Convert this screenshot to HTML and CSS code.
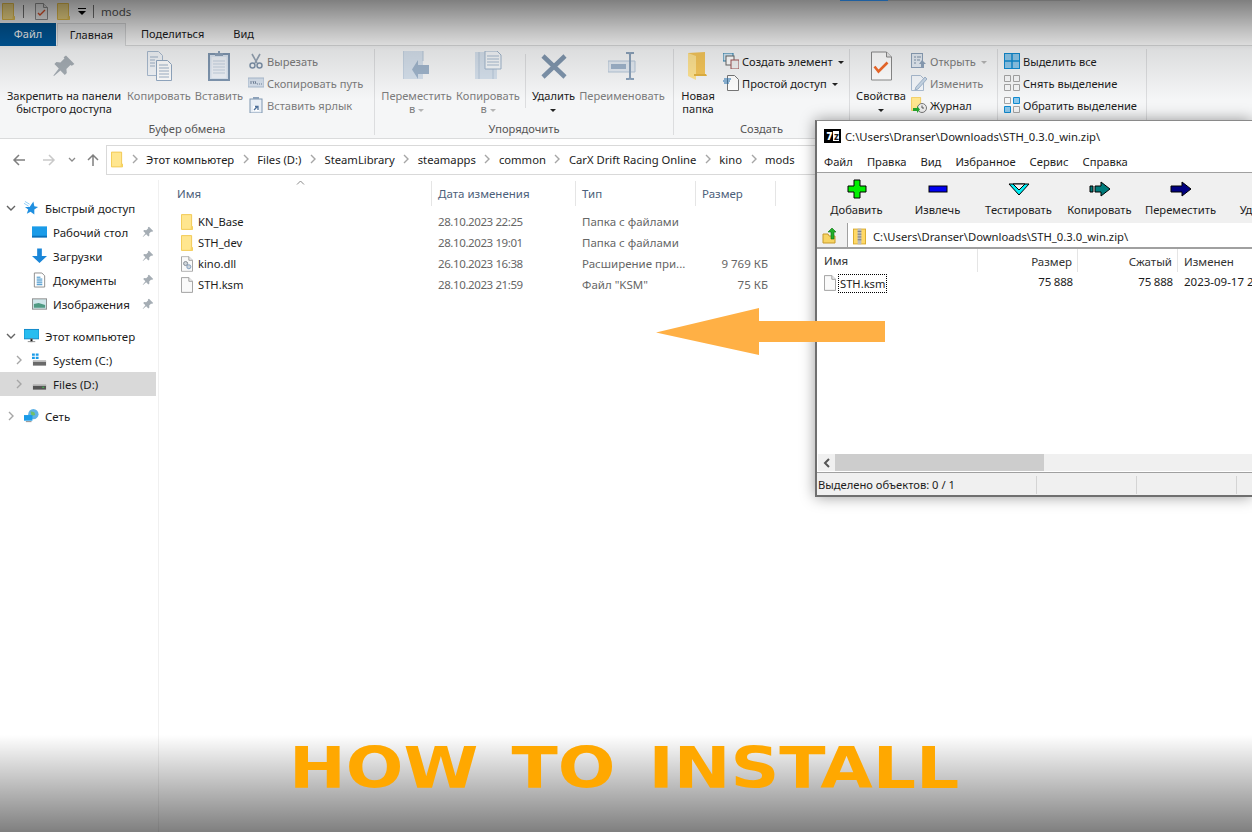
FILE: index.html
```html
<!DOCTYPE html>
<html>
<head lang="ru">
    <meta charset="UTF-8">
    <title>mods</title>
    <link rel="stylesheet" href="styles.css">
</head>
<body>
<svg class="defs" width="0" height="0">
    <symbol id="folder" viewBox="0 0 13 17">
        <path d="M.5.5h11v13h1v3H.5z" fill="#ffe68f" stroke="#f1c84e"/>
        <path d="M10.500 13.500h2v3h-2z" fill="#f7d463"/>
    </symbol>
    <symbol id="doc" viewBox="0 0 13 17">
        <path d="M.5.5h8l4 4v12H.5z" fill="#fafafa" stroke="#9b9b9b"/>
        <path d="M8.500.5v4h4" fill="#eee" stroke="#9b9b9b"/>
    </symbol>
    <symbol id="dll" viewBox="0 0 13 17">
        <use href="#doc"/>
        <circle cx="5" cy="8" r="2.200" fill="#cfd5da" stroke="#808890"/>
        <circle cx="8.500" cy="11.500" r="2.200" fill="#cfd5da" stroke="#7e9cc0"/>
    </symbol>
    <symbol id="chev-r" viewBox="0 0 8 10">
        <path d="M2 1l4 4-4 4" fill="none" stroke="#a6a6a6" stroke-width="1.400"/>
    </symbol>
    <symbol id="chev-d" viewBox="0 0 10 8">
        <path d="M1 2l4 4 4-4" fill="none" stroke="#636363" stroke-width="1.400"/>
    </symbol>
    <symbol id="pin" viewBox="0 0 12 12">
        <path d="M7 .8l4.200 4.200-1.300.9-.7-.4-2 2 .2 2-1 1-2.200-2.300L1 11l-.3-.3 2.700-3.400L1.200 5l1-1 2 .2 2-2-.4-.6z" fill="#a5adb4"/>
    </symbol>
</svg>

<div class="explorer">
    <div class="titlebar">
        <svg class="qa-folder"><use href="#folder"/></svg>
        <i class="qa-sep sep-one"></i>
        <svg class="qa-check" viewBox="0 0 13 17">
            <use href="#doc"/>
            <path d="M3 10l2 2 5-5" fill="none" stroke="#e8542a" stroke-width="1.400"/>
        </svg>
        <svg class="qa-folder"><use href="#folder"/></svg>
        <svg class="qa-more" viewBox="0 0 8 7"><path d="M0 .5h8" stroke="#000"/><path d="M0 3h8L4 7z" fill="#000"/></svg>
        <i class="qa-sep sep-two"></i>
        <span class="window-name">mods</span>
    </div>

    <div class="tabs">
        <span class="tab tab-file">Файл</span>
        <span class="tab tab-active">Главная</span>
        <span class="tab">Поделиться</span>
        <span class="tab">Вид</span>
    </div>

    <div class="ribbon">
        <div class="group group-clip">
            <div class="group-body">
                <div class="big pin-btn">
                    <svg width="24" height="24" viewBox="0 0 12 12"><use href="#pin"/></svg>
                    <span>Закрепить на панели<br>быстрого доступа</span>
                </div>
                <div class="big off copy-btn">
                    <svg width="25" height="30" viewBox="0 0 25 30">
                        <path d="M.5.5h11l4 4v20H.5z" fill="#f3f6fa" stroke="#a9bbd0"/>
                        <path d="M9.500 9.500h11l4 4v16h-15z" fill="#fff" stroke="#93a9c2"/>
                        <path d="M3 6h8M3 9h5M3 12h5M3 15h5M12 14h9M12 17h10M12 20h10M12 23h10M12 26h10" stroke="#9fb2c8"/>
                    </svg>
                    <span>Копировать</span>
                </div>
                <div class="big off paste-btn">
                    <svg width="22" height="30" viewBox="0 0 22 30">
                        <rect x="1" y="3" width="20" height="26" fill="#dbe5f1" stroke="#7f96b0" stroke-width="2"/>
                        <rect x="3.500" y="6" width="15" height="21" fill="#eef2f8"/>
                        <path d="M5 10h12M5 13h12M5 16h12M5 19h12M5 22h12" stroke="#c3d0df"/>
                        <path d="M7 5V2h3V0h2v2h3v3z" fill="#8da2ba"/>
                    </svg>
                    <span>Вставить</span>
                </div>
                <div class="smalls">
                    <div class="small off">
                        <svg viewBox="0 0 16 16"><path d="M4 1l5 9M12 1L7 10" stroke="#95a3b3" stroke-width="1.600" fill="none"/><circle cx="4.500" cy="12.500" r="2.500" fill="none" stroke="#7f93aa" stroke-width="1.500"/><circle cx="11.500" cy="12.500" r="2.500" fill="none" stroke="#7f93aa" stroke-width="1.500"/></svg>
                        <span>Вырезать</span>
                    </div>
                    <div class="small off">
                        <svg viewBox="0 0 16 16"><rect y="3" width="16" height="9" fill="#d4deea" stroke="#a9bbd0"/><path d="M3 6v3M5 6l1 3M7 6l1 3" stroke="#6f8098"/><path d="M9 9h1M11 9h1M13 9h1" stroke="#6f8098"/></svg>
                        <span>Скопировать путь</span>
                    </div>
                    <div class="small off">
                        <svg viewBox="0 0 16 16"><rect x="2" y="2" width="12" height="14" fill="#e8eef5" stroke="#7f96b0"/><path d="M5 2V0h6v2z" fill="#8da2ba"/><path d="M5 9h6v5H5z" fill="#fff"/><path d="M6 13l3-3M7 9.500h3V13" stroke="#4d6f99" fill="none" stroke-width="1.300"/></svg>
                        <span>Вставить ярлык</span>
                    </div>
                </div>
            </div>
            <div class="group-name">Буфер обмена</div>
        </div>

        <div class="group group-org">
            <div class="group-body">
                <div class="big off move-btn">
                    <svg width="27" height="30" viewBox="0 0 27 30">
                        <path d="M0 0h20v28H0z" fill="#d5e0ec"/><path d="M0 0v28M20 0v10" stroke="#b5c6d8"/>
                        <path d="M26 14v9H15v5L9 18.500l6-9.500v5z" fill="#9fb4cb"/>
                    </svg>
                    <span>Переместить<br>в <b class="caret-off"></b></span>
                </div>
                <div class="big off copyto-btn">
                    <svg width="27" height="30" viewBox="0 0 27 30">
                        <path d="M0 1h22v27H0z" fill="#d5e0ec"/><path d="M4 1v27M18 1v27" stroke="#b5c6d8"/>
                        <path d="M10 0h12l4 4v14H10z" fill="#f5f8fb" stroke="#9fb4cb"/>
                        <path d="M12 5h12M12 8h12M12 11h12M12 14h12" stroke="#a8bbd0"/>
                    </svg>
                    <span>Копировать<br>в <b class="caret-off"></b></span>
                </div>
                <i class="inner-sep"></i>
                <div class="big del-btn">
                    <svg width="26" height="26" viewBox="0 0 26 26"><path d="M2 3l22 21M24 3L2 24" fill="none" stroke="#7f95ad" stroke-width="4.500"/></svg>
                    <span>Удалить<br><b class="caret"></b></span>
                </div>
                <div class="big off ren-btn">
                    <svg width="28" height="28" viewBox="0 0 28 28">
                        <path d="M0 9h27v11H0z" fill="#e3eaf2" stroke="#b5c6d8"/>
                        <path d="M3 12h15v5H3z" fill="#9fb4cb"/>
                        <path d="M18 1h3l1 1 1-1h3M22 2v24M18 27h3l1-1 1 1h3" fill="none" stroke="#8ba2bb" stroke-width="2"/>
                    </svg>
                    <span>Переименовать</span>
                </div>
            </div>
            <div class="group-name">Упорядочить</div>
        </div>

        <div class="group group-new">
            <div class="group-body">
                <div class="big new-btn">
                    <svg width="20" height="28" viewBox="0 0 20 28">
                        <path d="M0 1l17-1v24H6z" fill="#f5c65a"/>
                        <path d="M0 1l8 3v24l-8-4z" fill="#ffe391"/>
                        <path d="M6 24h13l-1-2H6z" fill="#e3b341"/>
                    </svg>
                    <span>Новая<br>папка</span>
                </div>
                <div class="smalls">
                    <div class="small">
                        <svg viewBox="0 0 16 16"><rect x="0" y="0" width="10" height="8" fill="#cfe6f5" stroke="#2b7da8"/><rect x="3" y="3" width="8" height="9" fill="#fff" stroke="#666"/><rect x="8" y="7" width="8" height="9" fill="#f1f1f1" stroke="#a05050"/></svg>
                        <span>Создать элемент <b class="caret"></b></span>
                    </div>
                    <div class="small">
                        <svg viewBox="0 0 16 16"><path d="M4.500.5h7l4 4v11h-11z" fill="#fff" stroke="#777"/><path d="M1 4h7M0 6h7M1 8h5" stroke="#1f6fb0"/></svg>
                        <span>Простой доступ <b class="caret"></b></span>
                    </div>
                </div>
            </div>
            <div class="group-name">Создать</div>
        </div>

        <div class="group group-open">
            <div class="group-body">
                <div class="big props-btn">
                    <svg width="21" height="29" viewBox="0 0 21 29">
                        <path d="M.5.5h15l5 5v23H.5z" fill="#fff" stroke="#8a8a8a"/>
                        <path d="M15.500.5v5h5" fill="#e9e9e9" stroke="#8a8a8a"/>
                        <path d="M3.500 15l4 5 9-9" fill="none" stroke="#f26a2a" stroke-width="2.600"/>
                    </svg>
                    <span>Свойства<br><b class="caret"></b></span>
                </div>
                <div class="smalls">
                    <div class="small off">
                        <svg viewBox="0 0 16 16"><rect x=".5" y=".5" width="11" height="14" fill="#e4ebf3" stroke="#8da2ba"/><path d="M3 4h2M3 7h2M3 10h2M6 4h4M6 7h3" stroke="#7f93aa"/><path d="M11 7l4 4h-2v4h-3v-4H8z" fill="#8da2ba"/></svg>
                        <span>Открыть <b class="caret-off"></b></span>
                    </div>
                    <div class="small off">
                        <svg viewBox="0 0 16 16"><path d="M.5.500h9l3 3v12H.500z" fill="#f3f6fa" stroke="#a9bbd0"/><path d="M5 12l9-10 2 2-9 10-3 1z" fill="#c7d6e6" stroke="#9fb4cb"/></svg>
                        <span>Изменить</span>
                    </div>
                    <div class="small">
                        <svg viewBox="0 0 16 16"><use href="#folder" width="11" height="14"/><circle cx="11" cy="11" r="4.500" fill="#eee" stroke="#777"/><path d="M11 8.500V11h2" fill="none" stroke="#555"/><path d="M2 11h4v-2l3 3.500-3 3.500v-2H2z" fill="#27a72f"/></svg>
                        <span>Журнал</span>
                    </div>
                </div>
            </div>
        </div>

        <div class="group group-sel">
            <div class="group-body">
                <div class="smalls">
                    <div class="small">
                        <svg viewBox="0 0 16 16"><rect x=".5" y=".5" width="15" height="15" fill="#8cc7ea" stroke="#0f8ad0"/><path d="M8 0v16M0 8h16" stroke="#0f8ad0" stroke-width="1.500"/></svg>
                        <span>Выделить все</span>
                    </div>
                    <div class="small">
                        <svg viewBox="0 0 16 16"><path d="M.5.500h6v6h-6zM9.500.500h6v6h-6zM.5 9.500h6v6h-6zM9.500 9.500h6v6h-6z" fill="none" stroke="#a4a4a4"/></svg>
                        <span>Снять выделение</span>
                    </div>
                    <div class="small">
                        <svg viewBox="0 0 16 16"><path d="M.5.500h6v6h-6zM9.500 9.500h6v6h-6z" fill="none" stroke="#a4a4a4"/><path d="M9.500.500h6v6h-6zM.5 9.500h6v6h-6z" fill="#8cc7ea" stroke="#0f8ad0"/></svg>
                        <span>Обратить выделение</span>
                    </div>
                </div>
            </div>
        </div>
    </div>

    <div class="navbar">
        <svg class="nav-btn" viewBox="0 0 14 14"><path d="M13 7H2M7 2L2 7l5 5" fill="none" stroke="#7f7f7f" stroke-width="1.500"/></svg>
        <svg class="nav-btn off" viewBox="0 0 14 14"><path d="M1 7h11M7 2l5 5-5 5" fill="none" stroke="#c9c9c9" stroke-width="1.500"/></svg>
        <svg class="nav-drop" viewBox="0 0 10 8"><path d="M2 2l3 3 3-3" fill="none" stroke="#8a8a8a" stroke-width="1.300"/></svg>
        <svg class="nav-btn" viewBox="0 0 14 14"><path d="M7 13V2M2 7l5-5 5 5" fill="none" stroke="#7f7f7f" stroke-width="1.500"/></svg>
        <div class="crumbs">
            <svg class="crumb-folder"><use href="#folder"/></svg>
            <svg class="chev"><use href="#chev-r"/></svg>
            <span>Этот компьютер</span>
            <svg class="chev"><use href="#chev-r"/></svg>
            <span>Files (D:)</span>
            <svg class="chev"><use href="#chev-r"/></svg>
            <span>SteamLibrary</span>
            <svg class="chev"><use href="#chev-r"/></svg>
            <span>steamapps</span>
            <svg class="chev"><use href="#chev-r"/></svg>
            <span>common</span>
            <svg class="chev"><use href="#chev-r"/></svg>
            <span>CarX Drift Racing Online</span>
            <svg class="chev"><use href="#chev-r"/></svg>
            <span>kino</span>
            <svg class="chev"><use href="#chev-r"/></svg>
            <span>mods</span>
        </div>
    </div>

    <div class="main">
        <div class="side">
            <div class="tree-row top">
                <svg class="tree-chev"><use href="#chev-d"/></svg>
                <svg class="tree-icon" viewBox="0 0 16 16"><path d="M10 1l1 5 4 1-4 2.500L11 15l-4-3-4 2 1.500-4.500L1 7h5z" fill="#1f8fe0"/><path d="M0 3l5 3M1 1l5 3" stroke="#8ccbf5"/></svg>
                <span>Быстрый доступ</span>
            </div>
            <div class="tree-row">
                <svg class="tree-icon" viewBox="0 0 16 16"><rect y="2" width="16" height="11" fill="#1a9be8"/><rect y="12" width="16" height="2" fill="#0a6fb8"/></svg>
                <span>Рабочий стол</span>
                <svg class="pin-mark"><use href="#pin"/></svg>
            </div>
            <div class="tree-row">
                <svg class="tree-icon" viewBox="0 0 16 16"><path d="M5.500 0h5v8H16l-8 7.500L0 8h5.500z" fill="#1a86d8"/></svg>
                <span>Загрузки</span>
                <svg class="pin-mark"><use href="#pin"/></svg>
            </div>
            <div class="tree-row">
                <svg class="tree-icon" viewBox="0 0 16 16"><path d="M2.500.5h8l3 3v12h-11z" fill="#fff" stroke="#8a8a8a"/><path d="M5 5h4M5 7h6M5 9h6M5 11h6M5 13h6" stroke="#2b86c5"/></svg>
                <span>Документы</span>
                <svg class="pin-mark"><use href="#pin"/></svg>
            </div>
            <div class="tree-row">
                <svg class="tree-icon" viewBox="0 0 16 16"><rect x=".5" y="2.500" width="15" height="11" fill="#cfe6ea" stroke="#8a8a8a"/><path d="M2 8l5-1 7 2v3H2z" fill="#4f9a83"/></svg>
                <span>Изображения</span>
                <svg class="pin-mark"><use href="#pin"/></svg>
            </div>
            <div class="tree-row top gap">
                <svg class="tree-chev"><use href="#chev-d"/></svg>
                <svg class="tree-icon" viewBox="0 0 16 16"><rect y="1" width="16" height="10" fill="#27bdf0" stroke="#0b86c7"/><path d="M4 14h8M7 11h2v3H7z" stroke="#8a8a8a"/></svg>
                <span>Этот компьютер</span>
            </div>
            <div class="tree-row">
                <svg class="tree-chev right"><use href="#chev-r"/></svg>
                <svg class="tree-icon" viewBox="0 0 16 16"><rect x="1" y="9" width="14" height="5" fill="#6a6a6a"/><rect x="1" y="8" width="14" height="2" fill="#c7c7c7"/><path d="M0 1h3v2.500H0zM4 1h3v2.500H4zM0 4.500h3V7H0zM4 4.500h3V7H4z" fill="#1a9be8"/></svg>
                <span>System (C:)</span>
            </div>
            <div class="tree-row selected">
                <svg class="tree-chev right"><use href="#chev-r"/></svg>
                <svg class="tree-icon" viewBox="0 0 16 16"><rect x="1" y="9" width="14" height="5" fill="#555"/><rect x="1" y="8" width="14" height="2" fill="#bcbcbc"/><rect x="11" y="11" width="2" height="1" fill="#3fd04f"/></svg>
                <span>Files (D:)</span>
            </div>
            <div class="tree-row top gap">
                <svg class="tree-chev net"><use href="#chev-r"/></svg>
                <svg class="tree-icon" viewBox="0 0 16 16"><circle cx="10" cy="6" r="5.500" fill="#5fb2e6"/><path d="M7 3l4 1 1 3-4 1z" fill="#6fbf6a"/><rect y="7" width="9" height="6" fill="#1a9be8"/><path d="M2 14h6" stroke="#888"/></svg>
                <span>Сеть</span>
            </div>
        </div>

        <div class="files">
            <div class="list-head">
                <span class="col-name">Имя</span>
                <span>Дата изменения</span>
                <span>Тип</span>
                <span>Размер</span>
                <svg class="sort-caret" viewBox="0 0 9 5"><path d="M1 4.500l3.500-3.500L8 4.500" fill="none" stroke="#8a8a8a"/></svg>
            </div>
            <div class="file-row">
                <span class="file-name"><svg><use href="#folder"/></svg>KN_Base</span>
                <span class="date">28.10.2023 22:25</span>
                <span>Папка с файлами</span>
                <span></span>
            </div>
            <div class="file-row">
                <span class="file-name"><svg><use href="#folder"/></svg>STH_dev</span>
                <span class="date">28.10.2023 19:01</span>
                <span>Папка с файлами</span>
                <span></span>
            </div>
            <div class="file-row">
                <span class="file-name"><svg><use href="#dll"/></svg>kino.dll</span>
                <span class="date">26.10.2023 16:38</span>
                <span>Расширение при...</span>
                <span class="size">9 769 КБ</span>
            </div>
            <div class="file-row">
                <span class="file-name"><svg><use href="#doc"/></svg>STH.ksm</span>
                <span class="date">28.10.2023 21:59</span>
                <span>Файл "KSM"</span>
                <span class="size">75 КБ</span>
            </div>
        </div>
    </div>
</div>

<div class="zip">
    <div class="zip-title">
        <span class="zip-logo"><b>7</b>z</span>
        <span>C:\Users\Dranser\Downloads\STH_0.3.0_win.zip\</span>
    </div>
    <div class="zip-menu">
        <span>Файл</span><span>Правка</span><span>Вид</span><span>Избранное</span><span>Сервис</span><span>Справка</span>
    </div>
    <div class="zip-tools">
        <div class="tool">
            <svg viewBox="0 0 20 20"><path d="M7 1h6v6h6v6h-6v6H7v-6H1V7h6z" fill="#00f000" stroke="#000"/></svg>
            <span>Добавить</span>
        </div>
        <div class="tool">
            <svg viewBox="0 0 20 20"><rect x="1" y="7" width="18" height="6" fill="#0000f0" stroke="#000"/></svg>
            <span>Извлечь</span>
        </div>
        <div class="tool">
            <svg viewBox="0 0 22 20"><path d="M1 5h20l-10 11z" fill="#00eef5" stroke="#000"/><path d="M5 5l6 6 6-6z" fill="#f0f0f0" stroke="#000"/></svg>
            <span>Тестировать</span>
        </div>
        <div class="tool">
            <svg viewBox="0 0 22 20"><path d="M1 7h3v6H1zM6 7h6V3l9 7-9 7v-4H6z" fill="#007b7b" stroke="#000"/></svg>
            <span>Копировать</span>
        </div>
        <div class="tool">
            <svg viewBox="0 0 22 20"><path d="M1 7h11V3l9 7-9 7v-4H1z" fill="#000080" stroke="#000"/></svg>
            <span>Переместить</span>
        </div>
        <div class="tool"><span class="tool-blank"></span><span>Удалить</span></div>
    </div>
    <div class="zip-path">
        <svg class="zip-up" viewBox="0 0 16 16"><path d="M1 6h5l1 2h6v7H1z" fill="#f7d463" stroke="#c79a2a"/><path d="M9 11V4H6l4-4 4 4h-2v7z" fill="#22b02a" stroke="#0d6b12" stroke-width=".6"/></svg>
        <div class="zip-box">
            <svg viewBox="0 0 14 17"><rect x=".5" y=".5" width="13" height="16" fill="#ffd966" stroke="#d9a92a"/><rect x="5" y="0" width="4" height="17" fill="#bdbdbd"/><path d="M5 3h4M5 6h4M5 9h4M5 12h4" stroke="#777"/></svg>
            <span>C:\Users\Dranser\Downloads\STH_0.3.0_win.zip\</span>
        </div>
    </div>
    <div class="zip-list">
        <div class="zip-head">
            <span class="z-name">Имя</span>
            <span class="z-num">Размер</span>
            <span class="z-num">Сжатый</span>
            <span class="z-date">Изменен</span>
        </div>
        <div class="zip-row">
            <span class="z-name">
                <svg><use href="#doc"/></svg>
                <span class="focus">STH.ksm</span>
            </span>
            <span class="z-num">75 888</span>
            <span class="z-num">75 888</span>
            <span class="z-date">2023-09-17 21:59</span>
        </div>
    </div>
    <div class="zip-scroll">
        <span class="scroll-btn"><svg viewBox="0 0 8 10"><path d="M6 1L2 5l4 4" fill="none" stroke="#555" stroke-width="2"/></svg></span>
        <span class="scroll-thumb"></span>
    </div>
    <div class="zip-status">
        <span class="st-main">Выделено объектов: 0 / 1</span><span class="st-cell"></span><span class="st-cell"></span><span class="st-cell"></span>
    </div>
</div>

<div class="fade-top"></div>
<div class="fade-bottom"></div>
<div class="top-line"></div>

<svg class="big-arrow" width="230" height="50" viewBox="0 0 230 50">
    <path d="M0 25.500L103 1v13h126v21H103v13z" fill="#ffb045"/>
</svg>

<div class="how-to">HOW TO INSTALL</div>
</body>
</html>
```

FILE: styles.css
```css
* {
    margin: 0;
    padding: 0;
    box-sizing: border-box;
}

html, body {
    width: 1252px;
    height: 832px;
    overflow: hidden;
    background: #fff;
}

body {
    position: relative;
    font-family: "Noto Sans", "Liberation Sans", sans-serif;
    font-size: 11.5px;
    color: #1c1c1c;
    white-space: nowrap;
}

svg {
    display: block;
    flex: none;
}

.defs {
    position: absolute;
}

.off {
    color: #7c7c7c;
}

.explorer {
    height: 832px;
    display: flex;
    flex-direction: column;
}

/* title bar */
.titlebar {
    height: 23px;
    display: flex;
    align-items: center;
    padding-left: 2px;
}

.qa-folder {
    width: 13px;
    height: 17px;
}

.qa-sep {
    width: 1px;
    height: 13px;
    background: #777;
}

.sep-one {
    margin: 0 11px 0 8px;
}

.sep-two {
    margin: 0 7px;
}

.qa-check {
    width: 13px;
    height: 17px;
    margin-right: 9px;
}

.qa-more {
    width: 8px;
    height: 7px;
    margin-left: 8px;
}

.window-name {
    font-size: 11.5px;
    color: #555;
}

/* tabs */
.tabs {
    height: 23px;
    display: flex;
    border-bottom: 1px solid #dadbdc;
    background: #fff;
    font-size: 11px;
}

.tab {
    height: 23px;
    line-height: 22px;
    padding: 0 14px;
    margin-right: 1px;
}

.tab-file {
    width: 56px;
    background: #005a9e;
    color: #fff;
    text-align: center;
    padding: 0;
}

.tab-active {
    width: 69px;
    padding: 0;
    text-align: center;
    background: #f5f6f7;
    border: 1px solid #dadbdc;
    border-bottom: 0;
}

/* ribbon */
.ribbon {
    height: 93px;
    background: #f5f6f7;
    border-bottom: 1px solid #dadbdc;
    display: flex;
    padding-top: 3px;
    font-size: 11.1px;
}

.group {
    height: 86px;
    border-right: 1px solid #dcdddf;
    display: flex;
    flex-direction: column;
}

.group-clip { width: 375px; }
.group-org { width: 299px; }
.group-new { width: 176px; }
.group-open { width: 148px; }
.group-sel { width: 149px; }

.group-body {
    height: 74px;
    display: flex;
}

.group-name {
    height: 12px;
    line-height: 12px;
    text-align: center;
    color: #555;
}

.big {
    display: flex;
    flex-direction: column;
    align-items: center;
    text-align: center;
    line-height: 13px;
    padding-top: 2px;
}

.big svg {
    height: 30px;
    margin-bottom: 8px;
}

.big span {
    display: block;
}

.pin-btn { width: 120px; margin-left: 4px; }
.copy-btn { width: 70px; }
.paste-btn { width: 50px; }
.move-btn { width: 73px; margin-left: 5px; }
.copyto-btn { width: 70px; }
.del-btn { width: 49px; }
.ren-btn { width: 88px; }
.new-btn { width: 40px; margin-left: 4px; }
.props-btn { width: 54px; margin-left: 4px; }

.inner-sep {
    width: 1px;
    height: 54px;
    margin: 5px 3px 0 2px;
    background: #dcdddf;
}

.caret, .caret-off {
    display: inline-block;
    width: 0;
    height: 0;
    border: 3px solid transparent;
    border-top: 3px solid #222;
    border-bottom: 0;
    vertical-align: middle;
}

.caret-off {
    border-top-color: #b5b5b5;
}

.smalls {
    display: flex;
    flex-direction: column;
    margin: 1px 0 0 5px;
}

.small {
    height: 22px;
    display: flex;
    align-items: center;
    gap: 3px;
}

.small svg {
    width: 16px;
    height: 16px;
}

.small .caret, .small .caret-off {
    margin-left: 2px;
}

.group-clip .smalls {
    margin-left: 4px;
}

.group-sel .smalls {
    margin-left: 6px;
}

.group-open .smalls {
    margin-left: 3px;
}

/* address bar */
.navbar {
    height: 41px;
    display: flex;
    align-items: center;
    padding: 0 0 0 12px;
}

.nav-btn {
    width: 14px;
    height: 14px;
    margin-right: 16px;
}

.nav-drop {
    width: 10px;
    height: 8px;
    margin: 0 9px 0 -5px;
}

.crumbs {
    flex: 1;
    height: 30px;
    margin-left: -10px;
    display: flex;
    align-items: center;
    border: 1px solid #d9d9d9;
    padding: 0 0 1px 4px;
    gap: 7.5px;
    font-size: 11.25px;
}

.crumb-folder {
    width: 12px;
    height: 17px;
}

.chev {
    width: 8px;
    height: 10px;
}

/* main area */
.main {
    flex: 1;
    display: flex;
}

.side {
    width: 159px;
    border-right: 1px solid #f0f0f0;
    padding-top: 16px;
}

.tree-row {
    height: 24px;
    display: flex;
    align-items: center;
    padding-left: 32px;
    gap: 6px;
    position: relative;
    width: 156px;
}

.tree-row.top {
    padding-left: 24px;
}

.tree-row.gap {
    margin-top: 8px;
}

.tree-row.selected {
    background: #d9d9d9;
}

.tree-icon {
    width: 15px;
    height: 16px;
}

.tree-chev {
    width: 10px;
    height: 8px;
    position: absolute;
    left: 6px;
    top: 8px;
}

.tree-chev.right {
    width: 8px;
    height: 10px;
    left: 15px;
    top: 7px;
}

.tree-chev.net {
    width: 8px;
    height: 10px;
    left: 7px;
    top: 7px;
}

.pin-mark {
    width: 12px;
    height: 12px;
    position: absolute;
    left: 142px;
    top: 6px;
}

.files {
    flex: 1;
    position: relative;
}

.list-head, .file-row {
    display: grid;
    grid-template-columns: 273px 144px 120px 80px;
}

.list-head {
    height: 25px;
    margin-top: 1px;
    line-height: 25px;
    color: #4c607a;
    margin-bottom: 5px;
}

.list-head span {
    padding-left: 6px;
    border-right: 1px solid #e5e5e5;
}

.list-head .col-name {
    padding-left: 18px;
}

.sort-caret {
    position: absolute;
    left: 137px;
    top: 0;
    width: 9px;
    height: 5px;
}

.file-row {
    height: 21px;
    line-height: 21px;
    color: #666;
}

.file-row span {
    padding-left: 6px;
}

.file-row .date {
    letter-spacing: -0.4px;
}

.file-row .file-name {
    display: flex;
    align-items: center;
    gap: 5px;
    padding-left: 22px;
    color: #1c1c1c;
    font-size: 11.2px;
}

.file-name svg {
    width: 12px;
    height: 16px;
}

.file-row .size {
    padding: 0 8px 0 0;
    text-align: right;
}

/* 7-zip window */
.zip {
    position: absolute;
    left: 815px;
    top: 120px;
    width: 437px;
    height: 377px;
    background: #fff;
    border: 2px solid #6f6f6f;
    border-top: 1px solid #8a8a8a;
    border-right: 0;
    box-shadow: 0 0 14px rgba(0, 0, 0, 0.4);
    display: flex;
    flex-direction: column;
    overflow: hidden;
}

.zip-title {
    height: 30px;
    display: flex;
    align-items: center;
    padding-left: 7px;
    gap: 4px;
    font-size: 11.25px;
}

.zip-logo {
    width: 17px;
    height: 14px;
    line-height: 10px;
    border: 2px solid #000;
    font-size: 10px;
    font-weight: bold;
    display: flex;
}

.zip-logo b {
    width: 7px;
    background: #000;
    color: #fff;
    text-align: center;
    margin-right: 1px;
}

.zip-menu {
    height: 22px;
    display: flex;
    align-items: center;
    padding-left: 7px;
    gap: 14px;
    border-bottom: 1px solid #a0a0a0;
    font-size: 11.2px;
}

.zip-tools {
    height: 50px;
    background: #f0f0f0;
    display: flex;
    font-size: 11.2px;
    margin-left: -1px;
}

.tool {
    width: 81px;
    flex: none;
    display: flex;
    flex-direction: column;
    align-items: center;
    padding-top: 6px;
}

.tool svg {
    width: 22px;
    height: 20px;
    margin-bottom: 3px;
}

.tool-blank {
    height: 23px;
}

.zip-path {
    height: 26px;
    display: flex;
    background: #f0f0f0;
    border-bottom: 2px solid #a0a0a0;
}

.zip-up {
    width: 16px;
    height: 16px;
    margin: 5px 9px 0 5px;
}

.zip-box {
    flex: 1;
    background: #fff;
    display: flex;
    align-items: center;
    gap: 7px;
    padding: 2px 0 0 5px;
    font-size: 11.25px;
    border-left: 1px solid #a0a0a0;
}

.zip-box svg {
    width: 13px;
    height: 17px;
}

.zip-list {
    flex: 1;
}

.zip-head, .zip-row {
    display: flex;
    margin-left: 1px;
}

.zip-head {
    height: 23px;
    line-height: 25px;
    color: #333;
}

.zip-head span {
    border-right: 1px solid #e5e5e5;
}

.zip-row {
    height: 22px;
    line-height: 20px;
}

.z-name {
    width: 160px;
    padding-left: 6px;
    display: flex;
    gap: 2px;
    align-items: center;
    flex: none;
}

.z-name svg {
    width: 12px;
    height: 16px;
}

.focus {
    border: 1px dotted #000;
    padding: 0 1px;
    line-height: 17px;
    font-size: 11.2px;
}

.z-num {
    width: 100px;
    padding-right: 5px;
    text-align: right;
    flex: none;
}

.zip-row .z-num {
    letter-spacing: -0.2px;
}

.z-date {
    width: 150px;
    padding-left: 6px;
    flex: none;
}

.zip-scroll {
    height: 17px;
    background: #f0f0f0;
    display: flex;
    margin: 0 0 1px 1px;
}

.scroll-btn {
    width: 17px;
    display: flex;
    align-items: center;
    justify-content: center;
}

.scroll-btn svg {
    width: 8px;
    height: 10px;
}

.scroll-thumb {
    width: 209px;
    background: #cdcdcd;
}

.zip-status {
    height: 23px;
    background: #f0f0f0;
    border-top: 1px solid #a0a0a0;
    display: flex;
    align-items: center;
    padding: 1px 0 0 1px;
    font-size: 11.2px;
}

.st-main {
    width: 218px;
    flex: none;
}

.st-cell {
    width: 100px;
    flex: none;
    height: 18px;
    border-left: 1px solid #d4d4d4;
}

/* overlays */
.fade-top {
    position: absolute;
    left: 0;
    top: 0;
    width: 100%;
    height: 100px;
    background: linear-gradient(rgba(0, 0, 0, 0.5), rgba(0, 0, 0, 0.25) 30%, rgba(0, 0, 0, 0.1) 50%, rgba(0, 0, 0, 0));
    pointer-events: none;
}

.fade-bottom {
    position: absolute;
    left: 0;
    top: 735px;
    width: 100%;
    height: 97px;
    background: linear-gradient(rgba(0, 0, 0, 0), rgba(0, 0, 0, 0.5));
    pointer-events: none;
}

.top-line {
    position: absolute;
    left: 840px;
    top: 0;
    width: 240px;
    height: 1px;
    background: linear-gradient(90deg, #1f5f9f 20%, #707070 20%);
}

.big-arrow {
    position: absolute;
    left: 656px;
    top: 307px;
}

.how-to {
    position: absolute;
    left: 289px;
    top: 735px;
    font-family: "DejaVu Sans", sans-serif;
    font-weight: bold;
    font-size: 57px;
    line-height: 66px;
    color: #ffa800;
    word-spacing: 8px;
    transform: scaleX(1.19);
    transform-origin: left top;
}
```
